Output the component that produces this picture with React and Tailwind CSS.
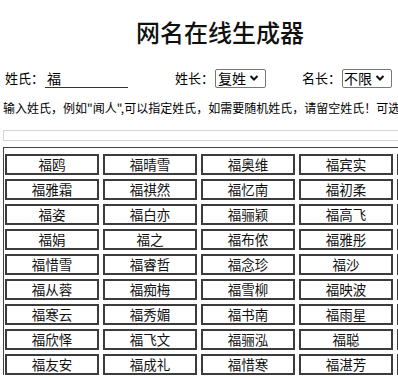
import React from "react";

const names = [
  ["福鸥", "福晴雪", "福奥维", "福宾实", "福雅韵"],
  ["福雅霜", "福祺然", "福忆南", "福初柔", "福清"],
  ["福姿", "福白亦", "福骊颖", "福高飞", "福海"],
  ["福娟", "福之", "福布侬", "福雅彤", "福安"],
  ["福惜雪", "福睿哲", "福念珍", "福沙", "福宁"],
  ["福从蓉", "福痴梅", "福雪柳", "福映波", "福言"],
  ["福寒云", "福秀媚", "福书南", "福雨星", "福和"],
  ["福欣怿", "福飞文", "福骊泓", "福聪", "福曼"],
  ["福友安", "福成礼", "福惜寒", "福湛芳", "福悦"],
];

function Chevron() {
  return (
    <svg width="10" height="8" viewBox="0 0 10 8" className="ml-[3px]">
      <path d="M1.5 2 L5 5.5 L8.5 2" fill="none" stroke="#111" strokeWidth="2" />
    </svg>
  );
}

export default function App() {
  const font = { fontFamily: '"Noto Sans CJK SC", "Liberation Sans", sans-serif' };
  return (
    <div className="w-[398px] h-[377px] overflow-hidden bg-white text-black" style={font}>
      <div className="w-[520px]">
        <div className="w-[440px] flex justify-center pt-[15px] h-[60px]">
          <h1 className="text-[24px] leading-[34px] font-medium text-[#111]">网名在线生成器</h1>
        </div>
        <div className="flex items-center h-[22px] mt-[7px] text-[13px]">
          <span className="ml-[5px] w-[40px]">姓氏：</span>
          <div className="w-[83px] h-[20px] border-b border-[#333] pl-[2px] text-[14px] leading-[20px]">福</div>
          <span className="ml-[47px] w-[40px]">姓长：</span>
          <div className="w-[51px] h-[19px] border border-[#777] rounded-[2px] flex items-center pl-[2px] text-[14px]">
            复姓<Chevron />
          </div>
          <span className="ml-[36px] w-[40px]">名长：</span>
          <div className="w-[50px] h-[19px] border border-[#777] rounded-[2px] flex items-center pl-[1px] text-[14px]">
            不限<Chevron />
          </div>
        </div>
        <div className="mt-[10px] ml-[3px] text-[12px] leading-[18px] whitespace-nowrap">
          输入姓氏，例如"闻人",可以指定姓氏，如需要随机姓氏，请留空姓氏！可选姓长和名长，点击生成。
        </div>
        <div className="mt-[13px] ml-[3px] h-[11px] border border-[#d4d4d4]"></div>
        <div className="mt-[6px] ml-[3px] border-l border-t border-[#444] pt-[6px] pl-[1px]">
          <div className="grid grid-cols-[repeat(5,94px)] gap-x-[4px] gap-y-[4px]">
            {names.flat().map((n, i) => (
              <div
                key={i}
                className="h-[21px] border-2 border-[#3c3c3c] flex items-center justify-center text-[13.5px] leading-none text-[#111]"
              >
                {n}
              </div>
            ))}
          </div>
        </div>
      </div>
    </div>
  );
}
